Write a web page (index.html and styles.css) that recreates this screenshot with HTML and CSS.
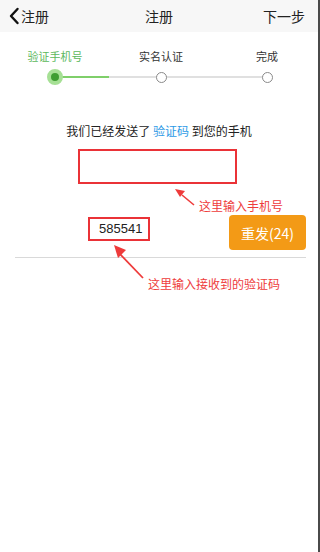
FILE: index.html
```html
<!DOCTYPE html>
<html lang="zh-CN">
<head>
<meta charset="utf-8">
<title>注册</title>
<link rel="stylesheet" href="styles.css">
</head>
<body>
<div class="screen">
  <header class="nav">
    <div class="nav-left">
      <svg class="chev" width="12" height="18" viewBox="0 0 12 18"><path d="M9.5 2 L3 9 L9.5 16" fill="none" stroke="#111" stroke-width="2.4" stroke-linecap="round" stroke-linejoin="round"/></svg>
      <span>注册</span>
    </div>
    <div class="nav-title">注册</div>
    <div class="nav-right">下一步</div>
  </header>

  <section class="steps">
    <div class="step-labels">
      <span class="lbl active">验证手机号</span>
      <span class="lbl">实名认证</span>
      <span class="lbl">完成</span>
    </div>
    <div class="track">
      <span class="dot current"></span>
      <span class="dot"></span>
      <span class="dot"></span>
    </div>
  </section>

  <p class="msg">我们已经发送了 <span class="blue">验证码</span> 到您的手机</p>
  <div class="phone-box"></div>
  <div class="note note1">这里输入手机号</div>

  <div class="code-row">
    <div class="code-box">585541</div>
    <button class="resend">重发(24)</button>
  </div>
  <div class="note note2">这里输入接收到的验证码</div>

  <svg class="arrow arrow1" width="30" height="26" viewBox="0 0 30 26">
    <line x1="11" y1="9" x2="23" y2="19" stroke="#ee3b3b" stroke-width="1.6"/>
    <polygon points="4,3 14,5 9,11" fill="#ee3b3b"/>
  </svg>
  <svg class="arrow arrow2" width="40" height="42" viewBox="0 0 40 42">
    <line x1="8" y1="12" x2="33" y2="38" stroke="#ee3b3b" stroke-width="1.8"/>
    <polygon points="4,5 16,10 8,18" fill="#ee3b3b"/>
  </svg>
</div>
</body>
</html>
```

FILE: styles.css
```css
* { box-sizing: border-box; }
html, body { margin: 0; padding: 0; }
body {
  font-family: "Noto Sans CJK SC", "Noto Sans", "Liberation Sans", sans-serif;
  background: #fff;
  color: #222;
}
.screen {
  position: relative;
  width: 320px;
  height: 552px;
  border-right: 2px solid #4a4a4a;
  background: #fff;
  overflow: hidden;
}
.nav {
  height: 32px;
  background: #f7f7f7;
  display: grid;
  grid-template-columns: 1fr auto 1fr;
  align-items: center;
  font-size: 14px;
  color: #222;
}
.nav-left {
  display: flex;
  align-items: center;
  padding-left: 8px;
  gap: 1px;
}
.chev { display: block; }
.nav-title { text-align: center; }
.nav-right { text-align: right; padding-right: 13px; }

.steps { padding-top: 16px; }
.step-labels {
  display: grid;
  grid-template-columns: repeat(3, 106px);
  margin-left: 2px;
  font-size: 11px;
  line-height: 16px;
  color: #333;
}
.lbl { text-align: center; }
.lbl.active { color: #5cb85c; }
.track {
  position: relative;
  display: grid;
  grid-template-columns: repeat(3, 106px);
  margin-left: 2px;
  margin-top: 5px;
  height: 16px;
  align-items: center;
  justify-items: center;
}
.track::before {
  content: "";
  position: absolute;
  left: 53px;
  right: 53px;
  top: 7px;
  height: 2px;
  background: #e0e0e0;
}
.track::after {
  content: "";
  position: absolute;
  left: 53px;
  width: 54px;
  top: 7px;
  height: 2px;
  background: #7fcf6a;
}
.dot {
  position: relative;
  z-index: 1;
  width: 11px;
  height: 11px;
  border-radius: 50%;
  border: 1.5px solid #8a8a8a;
  background: #fff;
}
.dot.current {
  width: 16px;
  height: 16px;
  border: 4px solid #a6e095;
  background: #3f9e32;
}

.msg {
  margin: 38px 0 0;
  text-align: center;
  font-size: 12px;
  line-height: 16px;
  color: #222;
}
.blue { color: #2d9ae6; }

.phone-box {
  margin: 10px 0 0 78px;
  width: 159px;
  height: 35px;
  border: 2px solid #ea3237;
}
.note {
  font-size: 12px;
  line-height: 16px;
  color: #ee3b3b;
}
.note1 { margin: 14px 0 0 199px; }

.code-row {
  display: flex;
  align-items: flex-start;
  margin: 1px 0 0 15px;
  padding: 0 0 7px 0;
  border-bottom: 1px solid #d9d9d9;
  width: 291px;
}
.code-box {
  margin: 2px 0 0 73px;
  width: 62px;
  height: 24px;
  border: 2px solid #ea3237;
  font-size: 13px;
  line-height: 20px;
  color: #222;
  padding-left: 9px;
  font-family: "Liberation Sans", "Noto Sans", sans-serif;
}
.resend {
  margin-left: auto;
  width: 77px;
  height: 35px;
  border: none;
  border-radius: 4px;
  background: #f39a16;
  color: #fff;
  font-family: "Noto Sans CJK SC", "Noto Sans", sans-serif;
  font-size: 14px;
  padding: 0;
}
.note2 { margin: 18px 0 0 148px; }

.arrow { position: absolute; }
.arrow1 { left: 171px; top: 186px; }
.arrow2 { left: 110px; top: 240px; }
```
